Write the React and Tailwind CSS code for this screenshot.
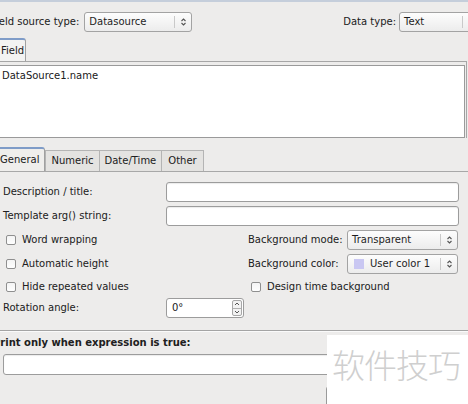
import React from 'react';

function UpDown() {
  return (
    <svg width="7" height="10" viewBox="0 0 7 10" className="text-[#555]">
      <path d="M1.5 4 L3.5 2 L5.5 4" fill="none" stroke="currentColor" strokeWidth="1.1" />
      <path d="M1.5 6 L3.5 8 L5.5 6" fill="none" stroke="currentColor" strokeWidth="1.1" />
    </svg>
  );
}

function Combo({ children, className = '' }) {
  return (
    <div
      className={`flex h-[20px] items-stretch rounded-[3px] border border-[#a3a3a3] bg-gradient-to-b from-[#fdfdfd] to-[#ececec] ${className}`}
    >
      <div className="flex flex-1 items-center gap-[6px] pl-[4px] text-[#1e1e1e]">{children}</div>
      <div className="my-[3px] w-px bg-[#c9c9c9]" />
      <div className="flex w-[16px] items-center justify-center">
        <UpDown />
      </div>
    </div>
  );
}

function Check({ label, className = '' }) {
  return (
    <div className={`flex items-center ${className}`}>
      <span className="h-[10px] w-[10px] rounded-[2px] border border-[#8f8f8f] bg-gradient-to-b from-[#f4f4f4] to-[#fefefe]" />
      <span className="ml-[6px]">{label}</span>
    </div>
  );
}

function Entry({ className = '', children }) {
  return (
    <div
      className={`flex h-[20px] items-center rounded-[3px] border border-[#9c9c9c] bg-white px-[5px] shadow-[inset_0_1px_1px_rgba(0,0,0,0.08)] ${className}`}
    >
      {children}
    </div>
  );
}

export default function App() {
  return (
    <div className="relative h-[404px] w-[468px] overflow-hidden bg-[#edeceb] font-['DejaVu_Sans',sans-serif] text-[10px] leading-none text-[#202020]">
      <div className="h-[2px] bg-[#c5cedb]" />

      {/* source / data type row */}
      <div className="mt-[10px] flex h-[20px] items-center">
        <span className="ml-[-9px]">Field source type:</span>
        <Combo className="ml-[5px] w-[108px]">Datasource</Combo>
        <span className="ml-auto">Data type:</span>
        <Combo className="ml-[3px] mr-[-12px] w-[81px]">Text</Combo>
      </div>

      {/* Field tab */}
      <div className="mt-[6px] flex h-[23px] items-end">
        <div className="ml-[-6px] flex h-[23px] w-[32px] items-center rounded-t-[3px] border border-b-0 border-[#a0a0a0] border-t-[2px] border-t-[#7f9cc8] bg-[#f3f3f2] pl-[6px]">
          Field
        </div>
      </div>
      <div className="ml-[-4px] mr-[1px] h-[77px] border border-b-0 border-[#a6a6a6] pt-[3px] pr-[1px]">
        <div className="h-[73px] border border-[#9a9a9a] bg-white pl-[4px] pt-[5px]">DataSource1.name</div>
      </div>

      {/* tabs row 2 */}
      <div className="mt-[9px] flex h-[24px] items-end">
        <div className="ml-[-6px] flex h-[24px] items-center rounded-t-[3px] border border-b-0 border-[#a0a0a0] border-t-[2px] border-t-[#7f9cc8] bg-[#efeeec] pl-[5px] pr-[5px]">
          General
        </div>
        <div className="flex h-[21px] items-center border border-b-0 border-[#b4b4b4] bg-[#e4e3e1] px-[5px]">Numeric</div>
        <div className="flex h-[21px] items-center border border-b-0 border-l-0 border-[#b4b4b4] bg-[#e4e3e1] px-[5px]">Date/Time</div>
        <div className="flex h-[21px] items-center border border-b-0 border-l-0 border-[#b4b4b4] bg-[#e4e3e1] px-[6px]">Other</div>
      </div>
      <div className="border-t border-[#a8a8a8]">
        <div className="mt-[10px] flex h-[20px] items-center">
          <span className="ml-[3px] w-[163px]">Description / title:</span>
          <Entry className="w-[293px]" />
        </div>
        <div className="mt-[4px] flex h-[20px] items-center">
          <span className="ml-[3px] w-[163px]">Template arg() string:</span>
          <Entry className="w-[293px]" />
        </div>
        <div className="mt-[4px] flex h-[20px] items-center">
          <Check className="ml-[6px] w-[242px]" label="Word wrapping" />
          <span className="w-[99px] whitespace-nowrap">Background mode:</span>
          <Combo className="w-[111px]">Transparent</Combo>
        </div>
        <div className="mt-[4px] flex h-[20px] items-center">
          <Check className="ml-[6px] w-[242px]" label="Automatic height" />
          <span className="w-[99px] whitespace-nowrap">Background color:</span>
          <Combo className="w-[111px]">
            <span className="ml-[2px] h-[10px] w-[10px] bg-[#c9c7f2]" />
            <span>User color 1</span>
          </Combo>
        </div>
        <div className="mt-[3px] flex h-[20px] items-center">
          <Check className="ml-[6px] w-[245px]" label="Hide repeated values" />
          <Check label="Design time background" />
        </div>
        <div className="mt-[1px] flex h-[20px] items-center">
          <span className="ml-[3px] w-[163px]">Rotation angle:</span>
          <div className="flex h-[20px] w-[78px] items-stretch rounded-[3px] border border-[#9c9c9c] bg-white">
            <span className="flex flex-1 items-center pl-[5px]">0°</span>
            <div className="my-[1px] mr-[1px] flex w-[10px] flex-col rounded-[2px] border border-[#a8a8a8] bg-[#f2f2f2]">
              <div className="flex flex-1 items-center justify-center border-b border-[#b0b0b0]">
                <svg width="6" height="4" viewBox="0 0 6 4"><path d="M1 3 L3 1 L5 3" fill="none" stroke="#555" strokeWidth="1" /></svg>
              </div>
              <div className="flex flex-1 items-center justify-center">
                <svg width="6" height="4" viewBox="0 0 6 4"><path d="M1 1 L3 3 L5 1" fill="none" stroke="#555" strokeWidth="1" /></svg>
              </div>
            </div>
          </div>
        </div>
      </div>

      {/* print condition */}
      <div className="mt-[12px] border-t border-[#a4a4a4] shadow-[0_1px_0_#fafafa]" />
      <div className="mt-[7px] ml-[-7px] font-bold">Print only when expression is true:</div>
      <Entry className="ml-[3px] mt-[6px] h-[21px] w-[456px]" />
      <div className="ml-[326px] mt-[11px] h-[30px] w-[120px] rounded-[3px] border border-[#9a9a9a] bg-[#f1f1f1]" />

      {/* watermark */}
      <div className="absolute left-[327px] top-[335px] h-[69px] w-[141px] bg-white">
        <div className="ml-[5px] mt-[13px] font-['Noto_Sans_CJK_SC',sans-serif] text-[33px] font-light leading-none tracking-[-1px] text-[#cfcfcf]">
          软件技巧
        </div>
      </div>
    </div>
  );
}
